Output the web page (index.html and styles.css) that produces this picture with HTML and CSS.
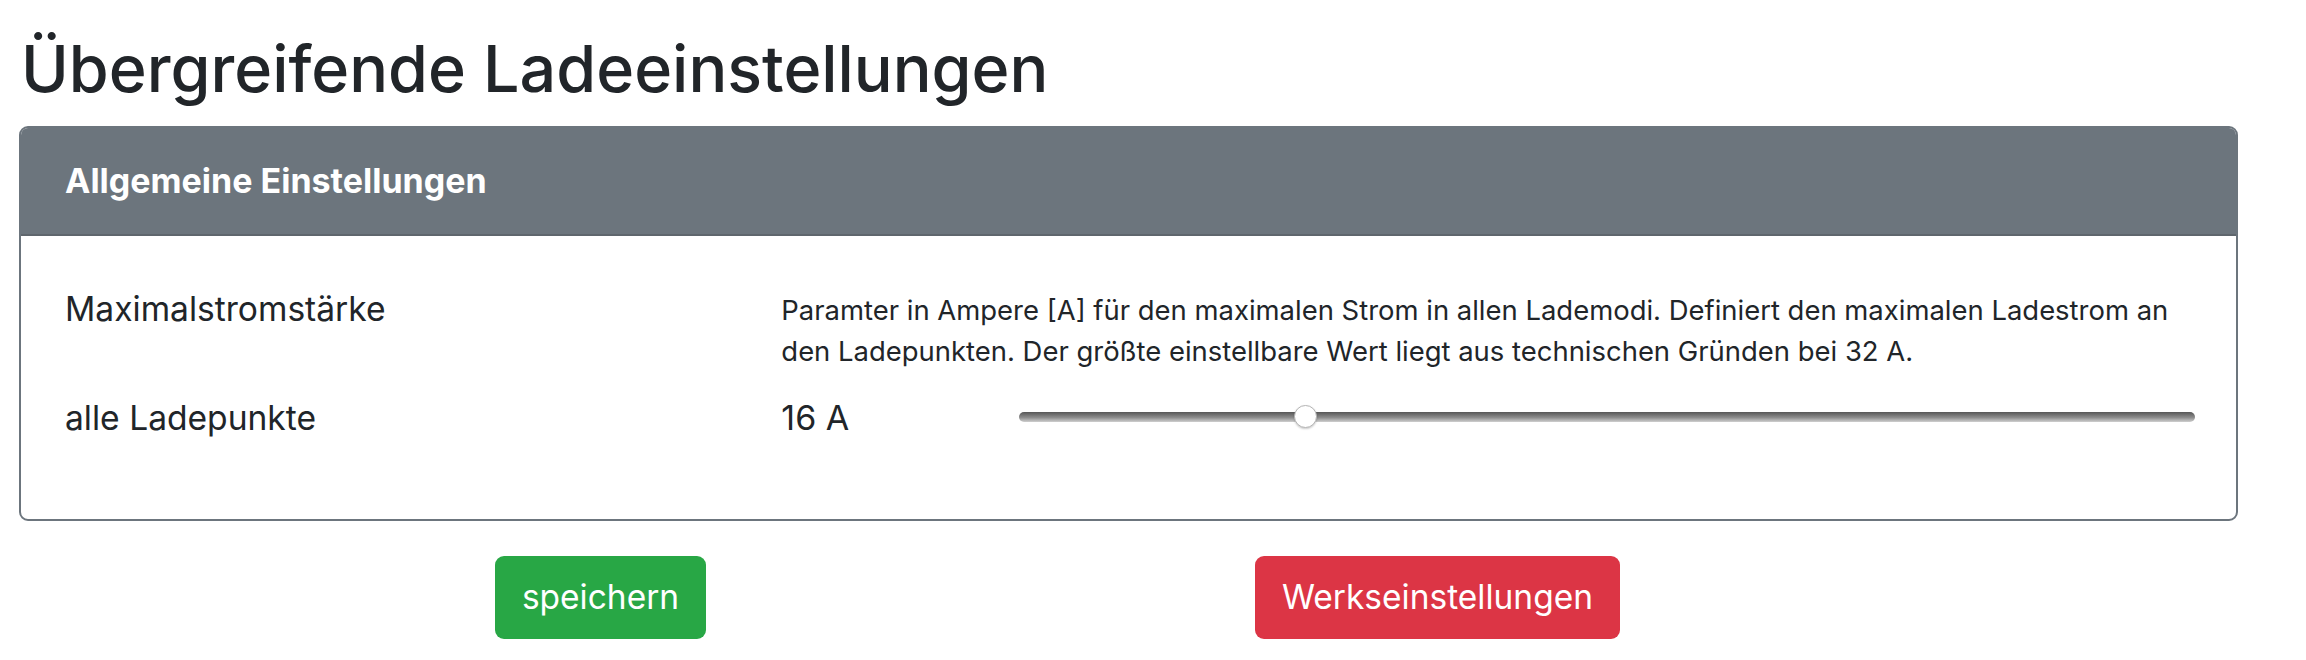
FILE: index.html
```html
<!DOCTYPE html>
<html lang="de">
<head>
    <meta charset="UTF-8">
    <meta name="viewport" content="width=device-width, initial-scale=1.0">
    <title>Übergreifende Ladeeinstellungen</title>

    <link rel="stylesheet" href="styles.css">
</head>
<body>
    <div class="page">
        <h1>Übergreifende Ladeeinstellungen</h1>
        <form id="form" class="form">
            <div class="card">
                <div class="card-header">Allgemeine Einstellungen</div>
                <div class="card-body">
                    <div class="setting">
                        <div class="label">Maximalstromstärke</div>
                        <div class="hint">Paramter in Ampere [A] für den maximalen Strom in allen Lademodi. Definiert den maximalen Ladestrom an den Ladepunkten. Der größte einstellbare Wert liegt aus technischen Gründen bei 32 A.</div>
                    </div>
                    <div class="setting setting-last">
                        <div class="label label-row">alle Ladepunkte</div>
                        <div class="slider-row">
                            <span class="value" id="value">16 A</span>
                            <input type="range" class="slider" id="maxCurrent" name="maxCurrent" min="6" max="48" value="16" oninput="showValue()">
                        </div>
                    </div>
                </div>
            </div>
            <div class="actions">
                <button type="submit" class="button button-save">speichern</button>
                <button type="button" class="button button-reset" onclick="resetValue()">Werkseinstellungen</button>
            </div>
        </form>
    </div>
    <script type="text/javascript">
        function showValue(){
            var slider = document.getElementById('maxCurrent');
            document.getElementById('value').innerHTML = slider.value + " A";
        }
        function resetValue(){
            document.getElementById('maxCurrent').value = 16;
            showValue();
        }
        document.getElementById("form").addEventListener("submit", function (event) {
            event.preventDefault();
        });
    </script>
</body>
</html>
```

FILE: styles.css
```css
body{
    margin: 0;
    background-color: #fff;
    color: #212529;
    font-family: Inter, "Liberation Sans", sans-serif;
}
.page{
    padding: 0 68px 0 19px;
}
h1{
    font-size: 64.6px;
    font-weight: 500;
    line-height: 1.2;
    margin: 30px 0 18px 2px;
}
.card{
    border: 2px solid #6c757d;
    border-radius: 9px;
    overflow: hidden;
}
.card-header{
    background-color: #6c757d;
    color: #fff;
    font-size: 34px;
    font-weight: bold;
    line-height: 52px;
    padding: 27px 44px;
    border-bottom: 2px solid #5f666d;
}
.card-body{
    padding: 44px 44px 44px 44px;
}
.setting{
    display: grid;
    grid-template-columns: 1fr 2fr;
    column-gap: 11px;
}
.setting-last{
    margin-top: 20px;
    margin-bottom: 32px;
}
.label{
    font-size: 33.6px;
    line-height: 51px;
    padding-top: 3px;
}
.label-row{
    padding-top: 0;
}
.hint{
    font-size: 27.45px;
    line-height: 41px;
    padding-top: 10px;
}
.slider-row{
    display: grid;
    grid-template-columns: 1fr 5fr;
    align-items: center;
}
.value{
    font-size: 34px;
    line-height: 51px;
}
.slider{
    -webkit-appearance: none;
    appearance: none;
    width: 100%;
    height: 24px;
    margin: 0 0 0 3px;
    background: transparent;
}
.slider::-webkit-slider-runnable-track{
    height: 10px;
    border-radius: 5px;
    background: linear-gradient(to bottom, #565656, #8c8c8c 55%, #cfcfcf);
}
.slider::-webkit-slider-thumb{
    -webkit-appearance: none;
    width: 23px;
    height: 23px;
    margin-top: -7px;
    border-radius: 50%;
    background: #fff;
    border: 1px solid #b5b5b5;
    box-shadow: 0 1px 2px rgba(0, 0, 0, 0.2);
}
.actions{
    display: grid;
    grid-template-columns: 837px 837px;
    justify-items: center;
    margin: 35px 0 0 163px;
}
.button{
    font-family: Inter, "Liberation Sans", sans-serif;
    font-size: 33.5px;
    line-height: 51px;
    padding: 15px 26px;
    color: #fff;
    border: 1px solid transparent;
    border-radius: 9px;
}
.button-save{
    background-color: #28a745;
}
.button-reset{
    background-color: #dc3545;
}
```
